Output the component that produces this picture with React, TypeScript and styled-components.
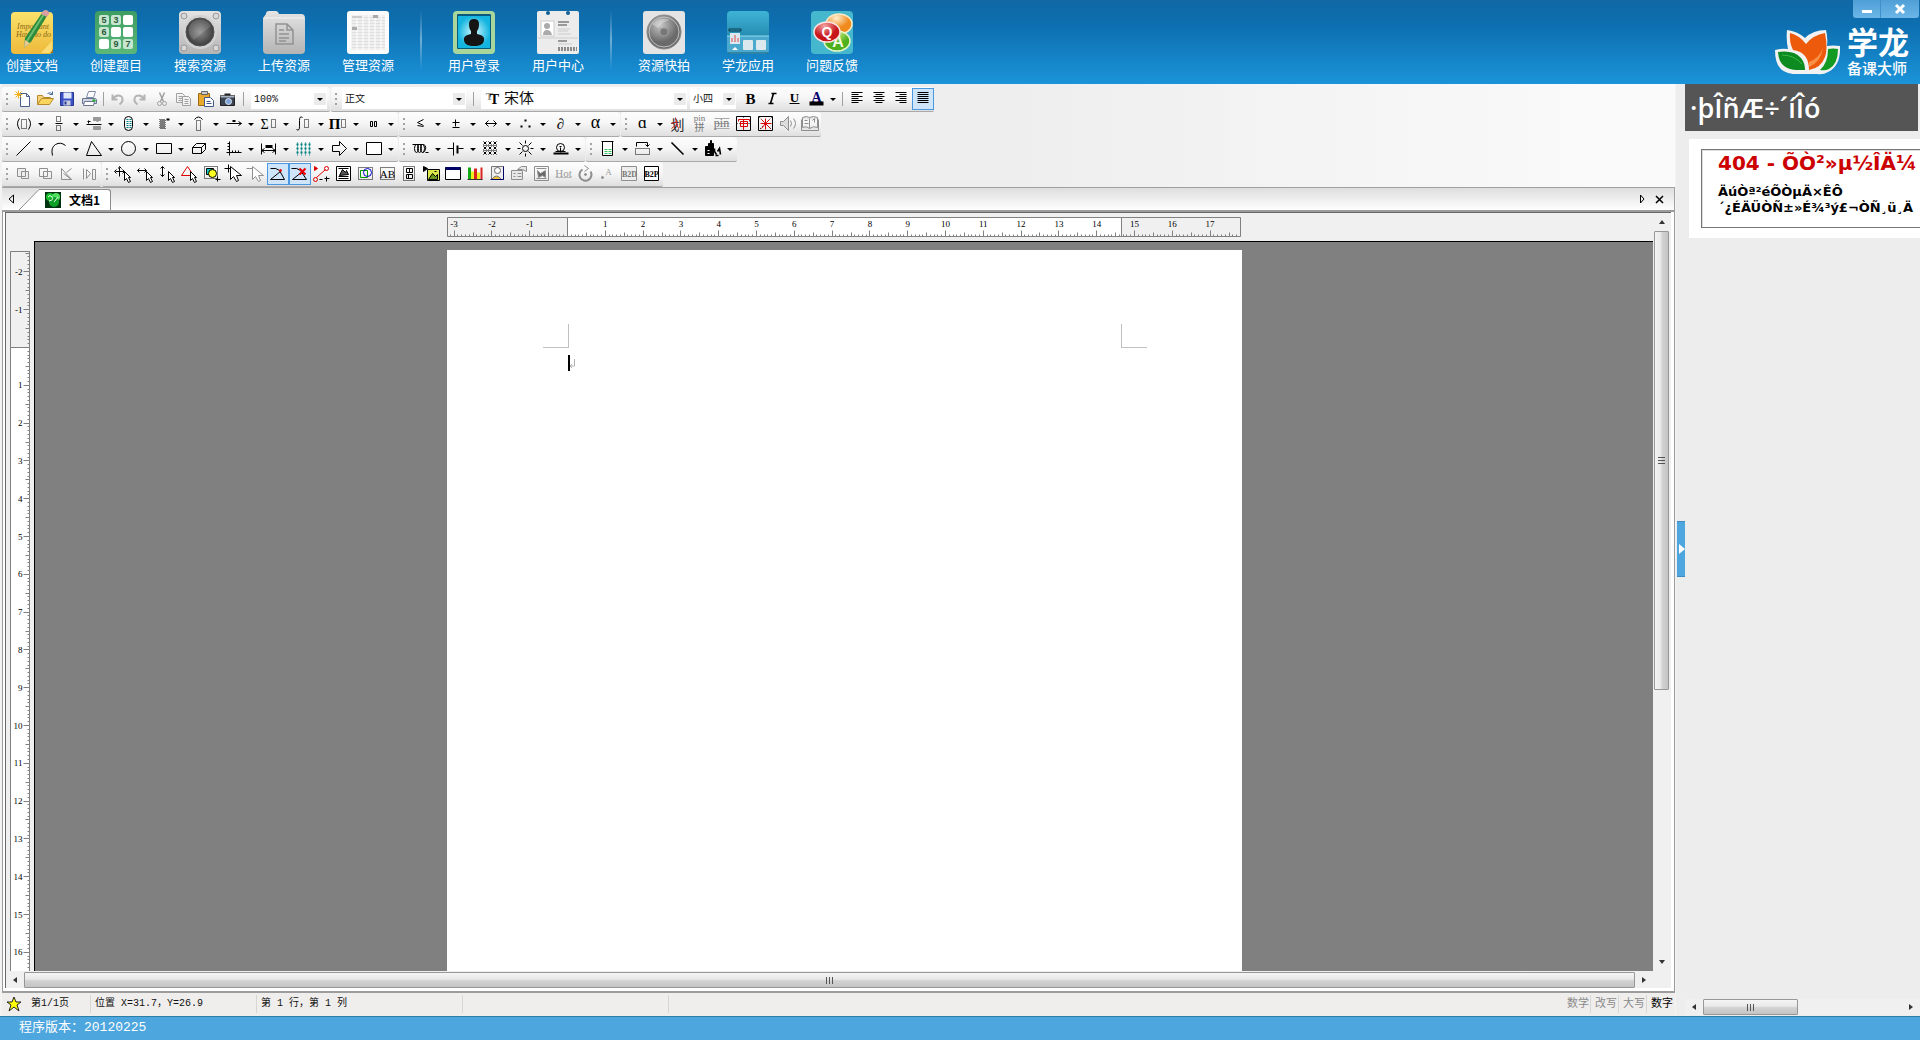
import React from "react";
import styled, { createGlobalStyle, css } from "styled-components";

const CJK = '"Noto Sans CJK SC", sans-serif';
const MONO = '"Liberation Mono", "Noto Sans CJK SC", monospace';

const Global = createGlobalStyle`
  *, *::before, *::after { box-sizing: border-box; }
  body { margin: 0; font-family: "Liberation Sans", ${CJK}; background: #eeeded; }
  button { margin: 0; padding: 0; border: 0; background: none; font: inherit; color: inherit; }
  svg { display: block; flex: none; }
`;

/* ---------- frame ---------- */

const Shell = styled.div`
  display: flex;
  flex-direction: column;
  height: 100vh;
  overflow: hidden;
`;

const Header = styled.header`
  flex: none;
  display: flex;
  justify-content: space-between;
  height: 84px;
  background: linear-gradient(#1168a4 0%, #0d6fb0 30%, #1b93d9 100%);
`;

const LaunchBar = styled.nav`
  display: flex;
  align-items: flex-start;
  gap: 20px;
  padding-top: 10px;
`;

const Launch = styled.button`
  display: flex;
  flex-direction: column;
  align-items: center;
  gap: 1px;
  width: 64px;
  color: #fff;
  font-family: ${CJK};
  font-size: 13px;
  line-height: 20px;
  white-space: nowrap;
`;

const LaunchRule = styled.span`
  width: 2px;
  height: 60px;
  background: linear-gradient(rgba(255, 255, 255, 0), rgba(255, 255, 255, 0.4), rgba(255, 255, 255, 0));
`;

const Brand = styled.div`
  display: flex;
  flex-direction: column;
  align-items: flex-end;
`;

const WindowButtons = styled.div`
  display: flex;
  height: 18px;
  margin-right: 1px;
  border-radius: 0 0 3px 3px;
  overflow: hidden;
  background: linear-gradient(#4f9fd6, #6cb6e8);
`;

const WindowButton = styled.button<{ $w: number }>`
  display: flex;
  align-items: center;
  justify-content: center;
  width: ${(p) => p.$w}px;
  & + & { border-left: 1px solid #3f8fc8; }
`;

const Logo = styled.div`
  display: flex;
  align-items: center;
  gap: 6px;
  margin: 10px 11px 0 0;
`;

const LogoWords = styled.div`
  display: flex;
  flex-direction: column;
  gap: 6px;
  color: #fff;
  font-family: ${CJK};
`;

const LogoName = styled.strong`
  font-size: 31px;
  font-weight: 700;
  line-height: 26px;
`;

const LogoSub = styled.span`
  font-size: 15px;
  font-weight: 500;
  line-height: 16px;
`;

const Main = styled.div`
  flex: 1;
  display: flex;
  min-height: 0;
`;

const Editor = styled.main`
  flex: 1;
  display: flex;
  flex-direction: column;
  min-width: 0;
  padding: 0 1px 0 2px;
  background: #f4f3f3;
`;

/* ---------- tool bars ---------- */

const ToolArea = styled.div`
  display: flex;
  flex-direction: column;
  padding-top: 3px;
  background: linear-gradient(90deg, #ececec, #eeeeee 60%, #fafafa 96%);
`;

const ToolRow = styled.div`
  display: flex;
  gap: 1px;
  height: 25px;
`;

const Group = styled.div`
  display: flex;
  align-items: center;
  padding-left: 4px;
  border-bottom: 1px solid #a9a9a9;
  border-radius: 2px 4px 2px 2px;
  background: linear-gradient(#fdfdfd, #f6f6f6 45%, #dfdfdf);
`;

const Grip = styled.span`
  width: 2px;
  height: 12px;
  margin-right: 5px;
  background: repeating-linear-gradient(#a3a3a3 0 2px, transparent 2px 5px);
`;

const Tool = styled.button<{ $on?: boolean; $menu?: boolean }>`
  display: flex;
  align-items: center;
  justify-content: ${(p) => (p.$menu ? "flex-start" : "center")};
  width: ${(p) => (p.$menu ? 35 : 22)}px;
  height: 22px;
  padding-left: ${(p) => (p.$menu ? 1 : 0)}px;
  ${(p) =>
    p.$on &&
    css`
      border: 1px solid #4b98e0;
      background: #cfe5fa;
    `}
`;

const Caret = styled.span`
  width: 0;
  height: 0;
  margin-left: 4px;
  border: 3px solid transparent;
  border-top-color: #000;
  border-bottom-width: 0;
`;

const Rule = styled.span<{ $wide?: boolean }>`
  width: 1px;
  height: 14px;
  margin: 0 ${(p) => (p.$wide ? 7 : 3)}px 0 ${(p) => (p.$wide ? 4 : 2)}px;
  background: #a0a0a0;
`;

const Field = styled.label<{ $w: number }>`
  position: relative;
  display: flex;
  align-items: center;
  width: ${(p) => p.$w}px;
  height: 20px;
  margin-right: 3px;
  padding-left: 3px;
  background: #fff;
`;

const Pick = styled.select<{ $big?: boolean }>`
  flex: 1;
  min-width: 0;
  height: 20px;
  padding: 0;
  border: 0;
  outline: 0;
  appearance: none;
  background: transparent;
  color: #111;
  font-family: ${MONO};
  font-size: ${(p) => (p.$big ? 15 : 10)}px;
`;

const FieldArrow = styled.span`
  position: absolute;
  right: 1px;
  top: 4px;
  display: flex;
  align-items: center;
  justify-content: center;
  width: 12px;
  height: 12px;
  background: #ebebeb;
  pointer-events: none;
  ${Caret} { margin: 0; }
`;

/* ---------- document tabs ---------- */

const TabStrip = styled.div`
  flex: none;
  display: flex;
  align-items: flex-end;
  height: 23px;
  border: 1px solid #a0a0a0;
  border-width: 1px 1px 0 0;
  background: linear-gradient(#dedede, #ffffff);
`;

const StripButton = styled.button`
  display: flex;
  align-items: center;
  justify-content: center;
  width: 17px;
  height: 22px;
`;

const Tab = styled.button`
  display: flex;
  align-items: center;
  height: 21px;
  padding-right: 10px;
  border: 1px solid #8c8c8c;
  border-width: 1px 1px 0 0;
  border-radius: 0 3px 0 0;
  background: #fff;
  font-family: ${CJK};
  font-size: 12px;
  font-weight: 700;
  line-height: 18px;
  gap: 8px;
`;

const StripEnd = styled.div`
  display: flex;
  gap: 1px;
  margin-left: auto;
  padding-right: 6px;
`;

/* ---------- work area ---------- */

const Frame = styled.section`
  flex: 1;
  display: flex;
  min-height: 0;
  padding: 0 3px 3px 2px;
  border: 1px solid #9c9c9c;
  border-width: 2px 1px;
  background: #fff;
`;

const Desk = styled.div`
  flex: 1;
  display: grid;
  grid-template-columns: 28px minmax(0, 1fr) 18px;
  grid-template-rows: 28px minmax(0, 1fr) 17px;
  min-width: 0;
  border: 1px solid #696969;
  border-width: 1px 0 0 1px;
  background: #f0f0f0;
`;

const TopRuler = styled.div`
  grid-column: 2;
  display: flex;
  justify-content: center;
  padding: 4px 0 0 1px;
`;

const SideRuler = styled.div`
  grid-column: 1;
  grid-row: 2;
  padding: 10px 0 0 4px;
  overflow: hidden;
`;

const Canvas = styled.div`
  grid-column: 2;
  grid-row: 2;
  display: flex;
  flex-direction: column;
  align-items: center;
  padding-top: 8px;
  border: 1px solid #000;
  border-width: 1px 0 0 1px;
  background: #808080;
`;

const Sheet = styled.article`
  flex: 1;
  width: 795px;
  padding: 74px 95px 0 96px;
  background: #fff;
`;

const Corners = styled.div`
  display: flex;
  justify-content: space-between;
`;

const Corner = styled.span<{ $side: "left" | "right" }>`
  width: 26px;
  height: 24px;
  border: 0 solid #c0c0c0;
  border-bottom-width: 1px;
  ${(p) => (p.$side === "left" ? "border-right-width: 1px;" : "border-left-width: 1px;")}
`;

const TextLine = styled.div`
  display: flex;
  align-items: center;
  height: 16px;
  margin: 7px 25px 0;
`;

const Cursor = styled.span`
  width: 2px;
  height: 16px;
  background: #000;
`;

/* ---------- scroll bars ---------- */

const VBar = styled.div`
  grid-column: 3;
  grid-row: 1 / 3;
  display: flex;
  flex-direction: column;
  padding: 0 2px 0 1px;
  background: #f0f0f0;
`;

const HBar = styled.div`
  grid-column: 1 / 3;
  grid-row: 3;
  display: flex;
  padding-top: 1px;
  background: #f0f0f0;
`;

const BarButton = styled.button<{ $vertical?: boolean }>`
  flex: none;
  display: flex;
  align-items: center;
  justify-content: center;
  width: ${(p) => (p.$vertical ? 15 : 18)}px;
  height: ${(p) => (p.$vertical ? 18 : 16)}px;
`;

const Thumb = styled.span<{ $vertical?: boolean; $part: number }>`
  flex: ${(p) => p.$part};
  display: flex;
  align-items: center;
  justify-content: center;
  border: 1px solid #979797;
  border-radius: 1px;
  background: linear-gradient(${(p) => (p.$vertical ? "90deg, " : "")}#f5f5f5, #e8e8e8 45%, #d2d2d2 55%, #c4c4c4);
`;

const Track = styled.span<{ $part: number }>`
  flex: ${(p) => p.$part};
`;

/* ---------- status ---------- */

const Status = styled.div`
  flex: none;
  display: flex;
  align-items: center;
  height: 23px;
  padding-bottom: 2px;
  background: #f0eeed;
  font-family: ${MONO};
  font-size: 10px;
  line-height: 18px;
  color: #111;
  white-space: pre;
`;

const Cell = styled.span<{ $w: number }>`
  display: flex;
  align-items: center;
  gap: 9px;
  width: ${(p) => p.$w}px;
  height: 18px;
  padding-left: 4px;
  border-right: 1px solid #d9d7d6;
`;

const Flags = styled.div`
  display: flex;
  margin-left: auto;
`;

const Flag = styled.span<{ $on?: boolean }>`
  width: 28px;
  border-right: 1px solid ${(p) => (p.$on ? "transparent" : "#d9d7d6")};
  text-align: right;
  padding-right: 1px;
  font-size: 11px;
  color: ${(p) => (p.$on ? "#000" : "#8a8a8a")};
`;

const Footer = styled.footer`
  flex: none;
  height: 24px;
  padding-left: 19px;
  border-top: 1px solid #2b7ea6;
  background: #4da6de;
  color: #fff;
  font-family: ${MONO};
  font-size: 13px;
  line-height: 22px;
`;

/* ---------- side panel ---------- */

const Splitter = styled.div`
  flex: none;
  display: flex;
  align-items: center;
  width: 9px;
  padding: 0 0 2px 1px;
`;

const Handle = styled.button`
  display: flex;
  align-items: center;
  justify-content: center;
  width: 8px;
  height: 56px;
  background: #4da6de;
  border: 1px solid #3c8cc0;
  border-width: 1px 0;
`;

const Side = styled.aside`
  flex: none;
  display: flex;
  flex-direction: column;
  width: 235px;
  min-width: 0;
  overflow: hidden;
`;

const SideTitle = styled.h1`
  margin: 0 2px 8px 0;
  padding-left: 5px;
  background: #555;
  color: #fff;
  font-family: "Open Sans", sans-serif;
  font-size: 27px;
  font-weight: 600;
  line-height: 47px;
  white-space: nowrap;
`;

const Notice = styled.div`
  margin-left: 4px;
  padding: 10px 0 10px 12px;
  background: #fff;
`;

const NoticeBox = styled.div`
  height: 79px;
  padding: 0 0 0 16px;
  border: 1px solid #777;
  border-right: 0;
  box-shadow: inset 1px 1px 0 #ddd;
  font-family: "DejaVu Sans", sans-serif;
  white-space: nowrap;
  overflow: hidden;
`;

const NoticeTitle = styled.h2`
  margin: 0 0 8px;
  color: #c00;
  font-size: 20px;
  line-height: 26px;
`;

const NoticeText = styled.p`
  margin: 0;
  font-size: 13px;
  font-weight: 700;
  line-height: 16px;
`;

const SideBar = styled.div`
  display: flex;
  height: 16px;
  margin: auto 0 1px;
  background: #f0f0f0;
`;

/* ---------- drawings ---------- */

const IconBox = styled.svg`
  overflow: visible;
`;

const Glyph = ({ children, g }: { children: React.ReactNode; g?: boolean }) => (
  <IconBox width="20" height="20" viewBox="0 0 20 20" fill="none" stroke={g ? "#8e8e8e" : "#000"} strokeWidth="1">
    <g transform="translate(.5 .5)">{children}</g>
  </IconBox>
);

const T = ({ x = 10, y, s, c = "#000", b, children }: { x?: number; y: number; s: number; c?: string; b?: boolean; children: string }) => (
  <text
    x={x}
    y={y}
    fontSize={s}
    fill={c}
    stroke="none"
    textAnchor="middle"
    fontWeight={b ? 700 : 400}
    fontFamily='"Liberation Serif", "Noto Sans CJK SC", serif'
  >
    {children}
  </text>
);

const Dots = ({ x, y, w, h, c }: { x: number; y: number; w: number; h: number; c?: string }) => (
  <rect x={x} y={y} width={w} height={h} strokeDasharray="1 1" stroke={c} />
);

const Arrow = ({ x = 9, y = 6, s = "#000" }) => (
  <path d={`M${x} ${y}v9l2-2l2 4l2-1l-2-4h2z`} fill="#fff" stroke={s} />
);

const BigArrow = ({ s = "#000" }) => <path d="M6 2v13l3-3l3 5l2-1l-2-5h5z" fill="#fff" stroke={s} />;

const Triangle = ({ dir, size = 3, color = "#333" }: { dir: "up" | "down" | "left" | "right"; size?: number; color?: string }) => {
  const turn = { up: 180, down: 0, left: 90, right: -90 }[dir];
  return (
    <svg width="10" height="10" viewBox="-5 -5 10 10">
      <path d={`M${-size}-2H${size}L0 ${size - 1}z`} fill={color} transform={`rotate(${turn})`} />
    </svg>
  );
};

const Ridges = ({ vertical }: { vertical?: boolean }) => (
  <svg width="9" height="9" viewBox="0 0 9 9" stroke="#555">
    <path d={vertical ? "M1 1.5h7M1 4.5h7M1 7.5h7" : "M1.5 1v7M4.5 1v7M7.5 1v7"} />
  </svg>
);

type Item = { n: string; i: React.ReactNode; m?: boolean; on?: boolean; g?: boolean };

const fileTools: Item[] = [
  { n: "新建", i: <><path d="M6 4h6l3 3v10H6z" fill="#fff" stroke="#4a5f8c" /><path d="M12 4v3h3" stroke="#4a5f8c" /><path d="M4 1v8M0 5h8M1 2l6 6M7 2L1 8" stroke="#f2b320" /></> },
  { n: "打开", i: <><path d="M1 15V6h5l1 2h7v3" fill="#f7d27a" stroke="#b78a2a" /><path d="M1 15l4-6h12l-4 6z" fill="#fbd65e" stroke="#b78a2a" /><path d="M11 4q3-2 5 1M16 2v3h-3" stroke="#4a6a9c" /></> },
  { n: "保存", i: <><path d="M2 3h13v13H2z" fill="#3c50c8" stroke="#27368f" /><path d="M5 3h8v6H5z" fill="#dfe8fb" stroke="none" /><path d="M5 11h7v5H5z" fill="#c8cede" stroke="none" /><path d="M6 12h2v3H6z" fill="#27368f" stroke="none" /></> },
  { n: "打印", i: <><path d="M6 8l2-6h7l-2 6z" fill="#fff" stroke="#7d8aa5" /><path d="M2 9h13l1 1v4H2z" fill="#cfd5e0" stroke="#6a7691" /><path d="M4 12h10l-1 4H3z" fill="#fff" stroke="#6a7691" /><path d="M12 11h3" stroke="#1ea82a" strokeWidth="2" /></> },
];

const editTools: Item[] = [
  { n: "撤销", i: <path d="M4 5v5h5M4 10q4-6 9-3q3 4-2 8" stroke="#b4b4b4" strokeWidth="2" /> },
  { n: "重做", i: <path d="M14 5v5h-5M14 10q-4-6-9-3q-3 4 2 8" stroke="#b4b4b4" strokeWidth="2" /> },
  { n: "剪切", i: <g stroke="#a0a0a0"><path d="M7 3l4 9M12 3L8 12" strokeWidth="1.5" /><circle cx="7" cy="14" r="2" /><circle cx="12" cy="14" r="2" /></g> },
  { n: "复制", i: <g stroke="#a0a0a0" fill="#f4f4f4"><path d="M2 4h6l2 2v7H2zM4 7h4M4 9h4M4 11h4" /><path d="M8 7h6l2 2v7H8zM10 10h4M10 12h4M10 14h4" /></g> },
  { n: "粘贴", i: <><path d="M2 4h11v12H2z" fill="#e9a92c" stroke="#9a6a12" /><path d="M5 2h6v3H5z" fill="#ccc" stroke="#666" /><path d="M8 8h6l3 3v6H8z" fill="#fff" stroke="#43598c" /><path d="M10 12h4M10 14h5" stroke="#43598c" /></> },
  { n: "截图", i: <><path d="M2 6h14v10H2z" fill="#3b4452" stroke="#222" /><path d="M2 6h14v2H2z" fill="#aab4c4" stroke="none" /><path d="M6 4h6v2H6z" fill="#222" stroke="none" /><circle cx="10" cy="12" r="3" fill="#7fa4d8" stroke="#dde6f2" /></> },
];

const alignTools: Item[] = [
  { n: "左对齐", i: <path d="M4 3h11M4 5h7M4 7h11M4 9h7M4 11h11M4 13h7" /> },
  { n: "居中", i: <path d="M4 3h11M6 5h7M4 7h11M6 9h7M4 11h11M6 13h7" /> },
  { n: "右对齐", i: <path d="M4 3h11M8 5h7M4 7h11M8 9h7M4 11h11M8 13h7" /> },
  { n: "两端对齐", on: true, i: <path d="M4 3h11M4 5h11M4 7h11M4 9h11M4 11h11M4 13h11" /> },
];

const mathTools: Item[] = [
  { n: "括号", i: <><path d="M5 4Q1 9 5 15M14 4Q18 9 14 15" /><Dots x={7} y={5} w={5} h={9} /></> },
  { n: "分式", i: <><Dots x={7} y={2} w={4} h={5} /><path d="M6 9h7" /><Dots x={7} y={11} w={4} h={5} /></> },
  { n: "竖式", i: <><path d="M9 3h7v3H9zM9 12h7v3H9z" fill="#999" stroke="#999" /><path d="M2 10h15M3 7h3M4 6v3" /><path d="M12 7h2" stroke="#999" /></> },
  { n: "矩阵", i: <><rect x="5" y="2" width="8" height="14" rx="4" /><path d="M7 5h5M7 7h5M7 9h5M7 11h5M7 13h5" stroke="#008080" strokeDasharray="2 1" /></> },
  { n: "上下标", i: <><path d="M5 5h6M5 7h6M5 9h6M5 11h6M5 13h6" strokeDasharray="1 1" /><path d="M6 6h6M6 8h6M6 10h6M6 12h6M6 14h6" strokeDasharray="1 1" /><path d="M12 5h3" strokeWidth="2" /></> },
  { n: "弧", i: <><path d="M5 5Q9 0 13 5" /><Dots x={7} y={6} w={4} h={10} /></> },
  { n: "箭头", i: <path d="M2 9h15M14 7l3 2l-3 2M8 7h3M8 6h3" /> },
  { n: "求和", i: <><T x={5} y={14} s={14}>Σ</T><Dots x={12} y={5} w={4} h={8} /></> },
  { n: "积分", i: <><path d="M8 3Q5 1 5 6V12Q5 17 2 15" /><Dots x={10} y={5} w={4} h={8} /></> },
  { n: "求积", i: <><T x={5} y={14} s={15} b>Π</T><Dots x={12} y={5} w={4} h={8} /></> },
  { n: "间距", i: <path d="M6 7h2v5H6zM10 7h2v5h-2z" /> },
];

const symbolTools: Item[] = [
  { n: "关系", i: <path d="M12 5l-6 3l6 3M6 11l6 1" /> },
  { n: "运算", i: <path d="M6 8h7M9 5v7M6 13h7" /> },
  { n: "双向", i: <path d="M4 9h11M7 6L4 9l3 3M12 6l3 3l-3 3" /> },
  { n: "逻辑", i: <path d="M9 5v2M5 11v2M13 11v2" strokeWidth="2" /> },
  { n: "偏导", i: <T x={9} y={14} s={15}>∂</T> },
  { n: "希腊字母", i: <T x={9} y={13} s={18}>α</T> },
];

const pinyinTools: Item[] = [
  { n: "笔画", i: <><T x={9} y={15} s={14} c="#222">划</T><path d="M3 9l6-2M7 3l1 6l2 5M3 14l6-5" stroke="#c22" /></> },
  { n: "拼音", i: <><T x={9} y={6} s={9} c="#777">pin</T><T x={9} y={16} s={10} c="#777">拼</T></> },
  { n: "拼音线", i: <><path d="M2 4h15M2 9h15M2 14h15" stroke="#aaa" /><T x={9} y={12} s={12} c="#777">pin</T></> },
  { n: "田字格", i: <><path d="M2 2h14v14H2z" /><path d="M9 2v14M2 9h14" strokeDasharray="1 2" /><path d="M6 7h7v5H6zM6 9h7M9 5v10M4 7V5h11v2" stroke="#d00" /></> },
  { n: "米字格", i: <><path d="M2 2h14v14H2z" /><path d="M3 3l12 12M15 3L3 15" strokeDasharray="1 2" /><path d="M4 9h11M9 4v11M9 9l-4 5M9 9l5 5M5 5l3 3M13 5l-3 3" stroke="#d00" /></> },
  { n: "朗读", g: true, i: <><path d="M2 7h3l5-5v14l-5-5H2z" fill="#ddd" /><path d="M12 6q2 3 0 6M15 4q4 5 0 10" /></> },
  { n: "词典", g: true, i: <><path d="M2 3q4-2 7 0q4-2 8 0v10q-4-2-8 1q-3-3-7-1zM1 5v11h17V5" fill="#e6e6e6" /><path d="M4 6h3M12 6l2-2v4M4 9h4M9 4v10" /></> },
];

const shapeTools: Item[] = [
  { n: "直线", i: <path d="M2 16L16 2" /> },
  { n: "曲线", i: <path d="M3 16Q1 8 6 5T16 6" /> },
  { n: "三角形", i: <path d="M7 2L2 16h15z" /> },
  { n: "圆", i: <circle cx="9" cy="9" r="7" /> },
  { n: "矩形", i: <path d="M2 4h15v10H2z" /> },
  { n: "立体", i: <path d="M3 8h9v6H3zM3 8l4-4h9l-4 4M16 4v6l-4 4" /> },
  { n: "坐标", i: <path d="M5 2v14M2 13h15M3 4h2M3 7h2M3 10h2M8 11v2M11 11v2M14 11v2" /> },
  { n: "尺寸", i: <><path d="M2 4v11M16 4v11M2 11h14M5 9l-3 2l3 2M13 9l3 2l-3 2" /><path d="M6 7h7" strokeWidth="3" /></> },
  { n: "网格", i: <><path d="M2 5h16M2 9h16M2 13h16" stroke="#008080" strokeWidth="2" strokeDasharray="2 2" /><path d="M3 3v13M7 3v13M11 3v13M15 3v13" stroke="#008080" strokeDasharray="1 1" /></> },
  { n: "箭头形", i: <path d="M3 6h7V2l7 7l-7 7v-4H3z" /> },
  { n: "方框", i: <path d="M2 3h15v12H2z" fill="#fff" /> },
];

const scienceTools: Item[] = [
  { n: "线圈", i: <><ellipse cx="5" cy="9" rx="2" ry="4" /><ellipse cx="8" cy="9" rx="2" ry="4" /><ellipse cx="11" cy="9" rx="2" ry="4" /><path d="M1 5h10q4 0 3 5q-1 3-3 3M14 13h3" /></> },
  { n: "电池", i: <><path d="M1 9h6M7 3v13M12 9h5" /><path d="M11 6v8" strokeWidth="2" /></> },
  { n: "晶格", i: <>{[3, 8, 13].map((y) => <path key={y} d={`M2 ${y - 1}l3 3M5 ${y - 1}l-3 3M7 ${y - 1}l3 3M10 ${y - 1}l-3 3M12 ${y - 1}l3 3M15 ${y - 1}l-3 3`} />)}<path d="M2 6h14M2 11h14" strokeDasharray="1 1" /></> },
  { n: "光", i: <><circle cx="9" cy="9" r="3" /><path d="M9 1v3M9 14v3M1 9h3M14 9h3M3 3l3 3M12 12l3 3M15 3l-3 3M6 12l-3 3" /></> },
  { n: "灯泡", i: <><circle cx="9" cy="8" r="4" /><path d="M9 8v5M8 7h2" /><path d="M2 14h15" strokeWidth="2" /><path d="M4 12h10" /></> },
];

const moreTools: Item[] = [
  { n: "烧杯", i: <><path d="M3 2h12M4 2v14h10V2" fill="#fff" /><path d="M6 10h7M6 12h7M6 14h7" stroke="#35c35a" strokeDasharray="3 1" /></> },
  { n: "装置", i: <><path d="M3 7V3h11v4M12 5l2 2l2-2" /><path d="M2 9h14v6H2z" strokeDasharray="1 1" /></> },
  { n: "斜线", i: <path d="M3 3l12 12" strokeWidth="1.6" /> },
  { n: "素材", i: <><path d="M2 7h3V4h2V1h1v3h2v12H2z" fill="#000" /><path d="M4 11h2M4 14h2" stroke="#fff" /><path d="M11 9v3l2 3M14 12l2-3l1 6M12 16h3" strokeWidth="1.6" /></> },
];

const arrangeTools: Item[] = [
  { n: "组合", g: true, i: <path d="M3 4h8v8H3zM7 7h7v7H7z" fill="#eee" /> },
  { n: "拆分", g: true, i: <path d="M3 4h8v8H3zM7 7h8v7H7z" /> },
  { n: "翻转", g: true, i: <path d="M3 4v11h10zM5 9l8 6M8 8l5-4" /> },
  { n: "镜像", g: true, i: <path d="M3 4v11M6 5l4 4l-4 5zM12 5h3v10h-3z" /> },
];

const objectTools: Item[] = [
  { n: "移动", i: <><path d="M1 7h9M5 3v9M4 4l1-2l2 2M2 5L0 7l2 2M8 5l2 2l-2 2" /><Arrow x={10} y={7} /></> },
  { n: "水平移动", i: <><path d="M1 6h9M3 4L1 6l2 2M8 4l2 2l-2 2" /><Arrow x={10} y={7} /></> },
  { n: "垂直移动", i: <><path d="M4 2v10M2 4l2-2l2 2M2 10l2 2l2-2" /><Arrow x={10} y={7} /></> },
  { n: "变形", i: <><path d="M1 11L7 2l6 9z" stroke="#d00" /><Arrow x={10} y={7} /></> },
  { n: "选择图形", i: <><Dots x={2} y={2} w={13} h={12} /><path d="M4 4h7v6H4z" fill="#0cc" /><circle cx="10" cy="9" r="4" fill="#ff2" /><path d="M15 12v5M13 15h5" /></> },
  { n: "加选", i: <><path d="M0 4h8M4 0v8" /><BigArrow /></> },
  { n: "减选", g: true, i: <><path d="M0 4h7" /><BigArrow s="#8e8e8e" /></> },
  { n: "折线", on: true, i: <><path d="M2 4q6-1 9 2L16 15H2L12 7" /><circle cx="12" cy="6" r="1" stroke="#e00" fill="#e00" /></> },
  { n: "删除点", on: true, i: <><path d="M1 4q6-1 9 2L16 15H2L12 7" /><path d="M9 4l6 6M15 4l-6 6" stroke="#e00" strokeWidth="2" /></> },
  { n: "节点", i: <><path d="M2 2v4l3-2zM4 13l9-8" stroke="#d00" fill="#d00" /><circle cx="14" cy="4" r="2" stroke="#d00" /><circle cx="3" cy="15" r="2" stroke="#d00" /><path d="M7 15h3M12 14h5M14 12v5" /></> },
  { n: "图文", i: <><path d="M2 2h14v14H2z" fill="#fff" /><path d="M4 4h10M4 12h10M4 14h10M5 11l3-6l3 3l1-2l2 4z" fill="#555" /></> },
  { n: "图形", i: <><Dots x={2} y={3} w={14} h={12} /><path d="M4 6h7v7H4z" stroke="#090" /><circle cx="11" cy="8" r="4" stroke="#00c" /></> },
  { n: "文本", i: <><Dots x={2} y={3} w={14} h={12} /><T x={9} y={13} s={11}>AB</T></> },
  { n: "竖排文本", i: <><Dots x={3} y={2} w={11} h={14} /><path d="M6 4h6v4H6zM9 4v4M6 10h6v4H6zM8 10v4" /></> },
  { n: "图片", i: <><path d="M5 5h12v11H5z" fill="#dde84c" /><path d="M6 15l4-6l3 3l2-2v5zM12 7h2" fill="#6a9a20" /><path d="M1 2v5l4-3z" fill="#000" /></> },
  { n: "窗口", i: <><path d="M1 3h15v12H1z" fill="#fff" /><path d="M1 4h15" stroke="#006" strokeWidth="3" /></> },
  { n: "图表", i: <><path d="M3 3v12" stroke="#1a1" strokeWidth="3" /><path d="M6 7v8" stroke="#ee2" strokeWidth="3" /><path d="M9 4v11" stroke="#d22" strokeWidth="3" /><path d="M12 8v7" stroke="#ee2" strokeWidth="3" /><path d="M15 3v12" stroke="#d22" strokeWidth="2" /><path d="M1 15h15" stroke="#333" /></> },
  { n: "人物", i: <><path d="M3 2h12v13H3z" fill="#eee" stroke="#777" /><circle cx="9" cy="6" r="3" fill="#fff" stroke="#666" /><path d="M3 15q5-7 10 0z" fill="#e7c23a" stroke="#777" /><path d="M15 2v13H2" stroke="#006" /></> },
  { n: "属性", g: true, i: <path d="M1 6h11v9H1zM3 9h2M7 9h4M3 12h2M7 12h4M7 5l4-3h5v5l-4-2z" fill="#e8e8e8" /> },
  { n: "动画", g: true, i: <><path d="M2 2h14v14H2zM4 4h10M4 14h10" /><path d="M5 6l3 3l5-3v7l-3-2l-4 2z" fill="#666" /></> },
  { n: "热区", g: true, i: <><T x={9} y={12} s={11} c="#999">Hot</T><path d="M1 13h16" stroke="#bbb" /></> },
  { n: "旋转", g: true, i: <><path d="M6 5a6 6 0 1 0 8 2" strokeWidth="2" /><path d="M8 1l4 3l-4 3" /><circle cx="9" cy="10" r="1" fill="#888" /></> },
  { n: "点标注", g: true, i: <><circle cx="4" cy="13" r="1" fill="#888" /><T x={10} y={10} s={9} c="#999">A</T></> },
  { n: "标签", g: true, i: <><path d="M1 2h15v14H1z" fill="#eee" /><T x={9} y={12} s={8} c="#777" b>B2D</T></> },
  { n: "标签面板", i: <><path d="M2 2h14v14H2z" fill="#fff" /><T x={9} y={12} s={8} b>B2P</T></> },
];

const ToolItems = ({ items, menu }: { items: Item[]; menu?: boolean }) => (
  <>
    {items.map((t) => (
      <Tool key={t.n} aria-label={t.n} $on={t.on} $menu={menu}>
        <Glyph g={t.g}>{t.i}</Glyph>
        {menu && <Caret />}
      </Tool>
    ))}
  </>
);

const Combo = ({ w, label, value, big, icon }: { w: number; label: string; value: string; big?: boolean; icon?: React.ReactNode }) => (
  <Field $w={w}>
    {icon}
    <Pick $big={big} aria-label={label} defaultValue={value}>
      <option>{value}</option>
    </Pick>
    <FieldArrow><Caret /></FieldArrow>
  </Field>
);

/* ---------- launch icons ---------- */

const Tile = ({ children }: { children: React.ReactNode }) => (
  <svg width="44" height="44" viewBox="0 0 44 44">{children}</svg>
);

const LaunchDefs = () => (
  <defs>
    <linearGradient id="note" x2="0" y2="1"><stop stopColor="#f9e26b" /><stop offset="1" stopColor="#eeb93a" /></linearGradient>
    <linearGradient id="steel" x2="0" y2="1"><stop stopColor="#e4e4e4" /><stop offset="1" stopColor="#b4b4b4" /></linearGradient>
    <linearGradient id="green" x2="0" y2="1"><stop stopColor="#3d9c62" /><stop offset="1" stopColor="#5cb878" /></linearGradient>
    <linearGradient id="aqua" x2="0" y2="1"><stop stopColor="#3fb4d6" /><stop offset="1" stopColor="#136f98" /></linearGradient>
    <radialGradient id="glow"><stop stopColor="#d5fbff" /><stop offset="1" stopColor="#12b4e0" /></radialGradient>
    <radialGradient id="lens"><stop stopColor="#8c8c8c" /><stop offset="1" stopColor="#3c3c3c" /></radialGradient>
    <radialGradient id="ball" cx=".4" cy=".3"><stop stopColor="#c6c6c6" /><stop offset="1" stopColor="#6a6a6a" /></radialGradient>
    <radialGradient id="q" cx=".4" cy=".2"><stop stopColor="#f3a3a3" /><stop offset="1" stopColor="#c8171b" /></radialGradient>
    <radialGradient id="o" cx=".4" cy=".2"><stop stopColor="#fff0d0" /><stop offset="1" stopColor="#f08a1c" /></radialGradient>
    <radialGradient id="a" cx=".5" cy=".1"><stop stopColor="#d3f08c" /><stop offset="1" stopColor="#4fb01e" /></radialGradient>
  </defs>
);

const word = (x: number, y: number, s: number, t: string, fill: string) => (
  <text key={t + x} x={x} y={y} fontSize={s} fontFamily='"Liberation Sans", sans-serif' fontWeight="700" textAnchor="middle" fill={fill}>{t}</text>
);

const sudoku = ["5", "3", "", "6", "", "", "", "9", "7"];

const launchers: (null | { n: string; i: React.ReactNode })[] = [
  { n: "创建文档", i: <><LaunchDefs /><rect x="1" y="2" width="42" height="42" rx="4" fill="url(#note)" /><path d="M3 43h37l3-4v4z" fill="#a8751a" /><path d="M31 43l11-12v8q0 4-4 4z" fill="#fbdc74" /><g fontFamily='"Liberation Serif", serif' fontSize="8" fontStyle="italic" fill="#8c6a1a"><text x="7" y="19">Important</text><text x="6" y="27">Have to do</text></g><path d="M32 3l5 3L21 32l-7 6l1-10z" fill="#2c8a3c" /><path d="M34 4L17 31" stroke="#6cc070" strokeWidth="2" /><path d="M33 1q3-2 5 0t1 3l-2 3l-6-3z" fill="#d8a0a0" /><path d="M15 30l5 3l-6 5z" fill="#e8c896" /></> },
  { n: "创建题目", i: <><rect x="1" y="1" width="42" height="43" rx="4" fill="url(#green)" />{sudoku.map((d, k) => { const x = 5 + (k % 3) * 12; const y = 5 + Math.floor(k / 3) * 12; return <g key={k}><rect x={x} y={y} width="10" height="10" rx="2" fill={d ? "#c6e6cf" : "#fff"} />{d && word(x + 5, y + 8, 9, d, "#2b5a3a")}</g>; })}</> },
  { n: "搜索资源", i: <><rect x="1" y="1" width="42" height="43" rx="4" fill="url(#steel)" />{[6, 38].flatMap((x) => [6, 38].map((y) => <circle key={`${x}${y}`} cx={x} cy={y} r="3" fill="#d8d8d8" stroke="#999" />))}<circle cx="22" cy="22" r="17" fill="#d2d2d2" /><circle cx="22" cy="22" r="14" fill="url(#lens)" stroke="#555" /><path d="M11 17a12 12 0 0 1 22-1L16 30a12 12 0 0 1-5-13z" fill="#fff" opacity=".14" /></> },
  { n: "上传资源", i: <><path d="M4 4q0-3 3-3h7q2 0 3 3h22q4 0 4 4v32q0 4-4 4H5q-4 0-4-4V8z" fill="url(#steel)" /><path d="M2 8h40" stroke="#f2f2f2" /><path d="M14 14h11l6 6v14H14zM25 14v6h6M17 20h5M17 24h10M17 28h10M17 31h7" fill="none" stroke="#939393" strokeWidth="1.5" /></> },
  { n: "管理资源", i: <><rect x="1" y="1" width="42" height="43" rx="3" fill="#fbfbfb" /><rect x="5" y="5" width="34" height="35" fill="#dedede" />{[5, 11, 17, 23, 29, 35, 40].map((x) => <path key={x} d={`M${x} 5v35`} stroke="#fff" />)}{Array.from({ length: 12 }, (_, k) => <path key={k} d={`M5 ${6 + k * 3}h34`} stroke="#fff" />)}<path d="M27 5h5v3h-5zM6 17h5v3H6z" fill="#aaa" /><path d="M6 6h10v2H6z" fill="#ccc" /></> },
  null,
  { n: "用户登录", i: <><rect x="1" y="1" width="42" height="43" rx="4" fill="#a9d79b" /><rect x="5" y="4" width="34" height="35" rx="1" fill="#0a5a80" /><rect x="6" y="6" width="32" height="32" fill="url(#glow)" /><path d="M17 14q0-5 5-5t5 5q0 5-2 7v3q6 1 7 4q1 8-10 8t-10-8q1-3 7-4v-3q-2-2-2-7z" fill="#151515" /></> },
  { n: "用户中心", i: <><rect x="1" y="1" width="42" height="43" rx="2" fill="#ececec" /><circle cx="12" cy="3" r="2" fill="#0d5f96" /><circle cx="32" cy="3" r="2" fill="#0d5f96" /><rect x="5" y="11" width="13" height="15" fill="#fff" stroke="#ccc" /><circle cx="11" cy="16" r="3" fill="#aaa" /><path d="M7 25q0-5 4-5t5 5z" fill="#aaa" /><path d="M22 12h11M22 15h9M22 31h9" stroke="#999" strokeWidth="2" /><path d="M22 19h12M22 21h10M22 24h13M2 28h40M22 34h14" stroke="#ccc" /><path d="M22 39h19" stroke="#888" strokeWidth="4" strokeDasharray="2 1" /></> },
  null,
  { n: "资源快拍", i: <><rect x="1" y="1" width="42" height="43" rx="3" fill="#e4e4e4" /><circle cx="22" cy="22" r="17" fill="url(#ball)" stroke="#8a8a8a" /><circle cx="22" cy="22" r="15" fill="none" stroke="#c2c2c2" /><circle cx="22" cy="22" r="4" fill="#777" stroke="#999" /><path d="M10 14q8-8 18-4q-8 2-12 8z" fill="#fff" opacity=".3" /></> },
  { n: "学龙应用", i: <><rect x="1" y="1" width="42" height="43" rx="4" fill="url(#aqua)" /><path d="M1 26h42v14q0 4-4 4H5q-4 0-4-4z" fill="#4aa9cc" /><path d="M1 26h42" stroke="#8fdcf0" /><path d="M3 19h12v2H3z" fill="none" stroke="#0c3c50" /><g fill="#dbe9ee"><rect x="4" y="23" width="10" height="11" /><rect x="17" y="30" width="10" height="10" rx="1" /><rect x="30" y="30" width="10" height="10" rx="1" /></g><path d="M6 32v-4M9 32v-7M12 32v-4" stroke="#e0484c" /><path d="M6 40l3-3l3 3z" fill="#fff" /><path d="M2 43h40" stroke="#13607e" /></> },
  { n: "问题反馈", i: <><rect x="1" y="1" width="42" height="43" rx="4" fill="#46b8ce" /><ellipse cx="29" cy="14" rx="13" ry="10" fill="url(#o)" stroke="#fbe9c6" strokeWidth="1.5" /><ellipse cx="27" cy="31" rx="13" ry="10" fill="url(#a)" stroke="#e6f8c8" strokeWidth="1.5" />{word(28, 37, 16, "A", "#f0fbe0")}<ellipse cx="17" cy="22" rx="13" ry="10" fill="url(#q)" stroke="#fbe3e3" strokeWidth="1.5" />{word(17, 27, 14, "Q", "#fff")}</> },
];

/* ---------- rulers ---------- */

const CM = 37.8;

const ticks = (from: number, to: number, draw: (p: number, len: number) => string) => {
  let d = "";
  for (let k = Math.ceil(from * 10); k <= to * 10; k++) {
    d += draw(Math.round((k / 10) * CM), k % 10 === 0 ? 6 : k % 5 === 0 ? 4 : 2);
  }
  return d;
};

const numbers = (from: number, to: number) =>
  Array.from({ length: to - from + 1 }, (_, k) => k + from).filter((n) => n !== 0);

const HRuler = () => (
  <svg width="795" height="20" viewBox="-120.5 -.5 795 20" fontFamily='"Liberation Serif", serif' fontSize="9">
    <path d="M-120 0H673V19H-120z" fill="#f0f0f0" stroke="#808080" />
    <path d="M0 0H554V19H0z" fill="#fff" stroke="#808080" />
    <path d={ticks(-3.1, 17.7, (p, l) => `M${p} 19v${-l}`)} stroke="#808080" />
    {numbers(-3, 17).map((n) => (
      <text key={n} x={n * CM} y="9" textAnchor="middle" fill="#000">{n}</text>
    ))}
  </svg>
);

const VRuler = () => (
  <svg width="20" height="1123" viewBox="-.5 -96.5 20 1123" fontFamily='"Liberation Serif", serif' fontSize="9">
    <path d="M0-96H19V1020H0z" fill="#fff" stroke="#808080" />
    <path d="M0-96H19V0H0z" fill="#f0f0f0" stroke="#808080" />
    <path d={ticks(-2.5, 26, (p, l) => `M19 ${p}h${-l}`)} stroke="#808080" />
    {numbers(-2, 16).map((n) => (
      <text key={n} x="12" y={n * CM + 3} textAnchor="end" fill="#000">{n}</text>
    ))}
  </svg>
);

export default function App() {
  return (
    <Shell>
      <Global />
      <Header>
        <LaunchBar>
          {launchers.map((l, k) =>
            l ? (
              <Launch key={l.n}>
                <Tile>{l.i}</Tile>
                {l.n}
              </Launch>
            ) : (
              <LaunchRule key={k} />
            )
          )}
        </LaunchBar>
        <Brand>
          <WindowButtons>
            <WindowButton $w={27} aria-label="最小化"><svg width="12" height="10"><path d="M1 6h10v3H1z" fill="#fff" /></svg></WindowButton>
            <WindowButton $w={39} aria-label="关闭"><svg width="12" height="12"><path d="M2 2l8 8M10 2l-8 8" stroke="#fff" strokeWidth="3" /></svg></WindowButton>
          </WindowButtons>
          <Logo>
            <svg width="67" height="48" viewBox="0 0 67 48">
              <path d="M13 2q10 1 18 8q8-8 21-8q2 8 1 16q6-1 13 0q1 20-12 26q-5 3-11 2H19Q1 45 1 22q6-2 13-1q-2-9-1-19z" fill="#f2f2f2" />
              <path d="M54 21q5-1 10 0q0 15-9 20q-4 2-9 1q8-7 8-21z" fill="#129a22" />
              <path d="M16 5q9 2 16 11q7-9 19-11q3 16 0 24q-4 11-16 13q0-18-16-20q-4-8-3-17z" fill="#ee5a0c" />
              <path d="M49 20q-2 14-14 19v-5q10-4 14-14z" fill="#f89048" />
              <path d="M4 24q16-2 23 6q4 5 4 12H22Q5 41 4 24z" fill="#0d8a20" />
              <path d="M8 27q12 0 20 9" stroke="#3cb848" fill="none" />
            </svg>
            <LogoWords>
              <LogoName>学龙</LogoName>
              <LogoSub>备课大师</LogoSub>
            </LogoWords>
          </Logo>
        </Brand>
      </Header>

      <Main>
        <Editor>
          <ToolArea>
            <ToolRow>
              <Group>
                <Grip />
                <ToolItems items={fileTools} />
                <Rule />
                <ToolItems items={editTools} />
                <Rule $wide />
                <Combo w={76} label="缩放" value="100%" />
              </Group>
              <Group>
                <Grip />
                <Combo w={124} label="样式" value="正文" />
                <Rule $wide />
                <Combo
                  w={206}
                  label="字体"
                  value="宋体"
                  big
                  icon={<Glyph><T x={5} y={10} s={11} c="#888" b>T</T><T x={10} y={14} s={14} b>T</T></Glyph>}
                />
                <Combo w={46} label="字号" value="小四" />
                <ToolItems
                  items={[
                    { n: "加粗", i: <T y={14} s={15} b>B</T> },
                    { n: "倾斜", i: <path d="M9 4h5M6 14h5M11 4L8 14" strokeWidth="1.6" /> },
                    { n: "下划线", i: <><T y={12} s={13} b>U</T><path d="M5 14h10" /></> },
                  ]}
                />
                <ToolItems menu items={[{ n: "字体颜色", i: <><T y={12} s={14} c="#000070" b>A</T><path d="M3 14h14" strokeWidth="4" /></> }]} />
                <Rule />
                <ToolItems items={alignTools} />
              </Group>
            </ToolRow>
            <ToolRow>
              <Group><Grip /><ToolItems menu items={mathTools} /></Group>
              <Group><Grip /><ToolItems menu items={symbolTools} /></Group>
              <Group>
                <Grip />
                <ToolItems menu items={[{ n: "拼音字母", i: <T x={9} y={13} s={17}>ɑ</T> }]} />
                <ToolItems items={pinyinTools} />
              </Group>
            </ToolRow>
            <ToolRow>
              <Group><Grip /><ToolItems menu items={shapeTools} /></Group>
              <Group><Grip /><ToolItems menu items={scienceTools} /></Group>
              <Group><Grip /><ToolItems menu items={moreTools} /></Group>
            </ToolRow>
            <ToolRow>
              <Group><Grip /><ToolItems items={arrangeTools} /></Group>
              <Group><Grip /><ToolItems items={objectTools} /></Group>
            </ToolRow>
          </ToolArea>

          <TabStrip>
            <StripButton aria-label="上一个"><svg width="8" height="10"><path d="M6.500 1v8L2 5z" fill="none" stroke="#000" /></svg></StripButton>
            <svg width="22" height="21"><path d="M0 21L20 .5H22V21z" fill="#fff" /><path d="M0 21L20 .5H22" fill="none" stroke="#8c8c8c" /></svg>
            <Tab>
              <svg width="20" height="16" viewBox="-4 0 20 16"><path d="M0 0h16v16H0z" fill="#031" /><circle cx="5" cy="5" r="4" fill="#18c030" /><circle cx="11" cy="5" r="4" fill="#50e060" /><circle cx="9" cy="10" r="5" fill="#0fa028" /><path d="M3 5q2-3 4 0t-3 4M9 10l4-5" stroke="#eaffea" fill="none" /></svg>
              文档1
            </Tab>
            <StripEnd>
              <StripButton aria-label="下一个"><svg width="8" height="10"><path d="M2.500 1v8L6 5z" fill="none" stroke="#000" /></svg></StripButton>
              <StripButton aria-label="关闭文档"><svg width="9" height="9"><path d="M1 1l7 7M8 1L1 8" stroke="#000" strokeWidth="1.5" /></svg></StripButton>
            </StripEnd>
          </TabStrip>

          <Frame>
            <Desk>
              <TopRuler><HRuler /></TopRuler>
              <SideRuler><VRuler /></SideRuler>
              <Canvas>
                <Sheet>
                  <Corners>
                    <Corner $side="left" />
                    <Corner $side="right" />
                  </Corners>
                  <TextLine>
                    <Cursor />
                    <svg width="6" height="10"><path d="M4.500 1v7H0M2 6L0 8l2 2" fill="none" stroke="#b0b0b0" /></svg>
                  </TextLine>
                </Sheet>
              </Canvas>
              <VBar>
                <BarButton $vertical aria-label="向上"><Triangle dir="up" /></BarButton>
                <Thumb $vertical $part={460}><Ridges vertical /></Thumb>
                <Track $part={264} />
                <BarButton $vertical aria-label="向下"><Triangle dir="down" /></BarButton>
              </VBar>
              <HBar>
                <BarButton aria-label="向左"><Triangle dir="left" /></BarButton>
                <Thumb $part={1}><Ridges /></Thumb>
                <BarButton aria-label="向右"><Triangle dir="right" /></BarButton>
              </HBar>
            </Desk>
          </Frame>

          <Status>
            <Cell $w={89}>
              <svg width="16" height="16" viewBox="0 0 16 16"><path d="M8 1l2 5h5l-4 3l2 6l-5-4l-5 4l2-6l-4-3h5z" fill="#ff0" stroke="#222" /></svg>
              <span>第1/1页</span>
            </Cell>
            <Cell $w={166}>位置 X=31.7，Y=26.9</Cell>
            <Cell $w={206}>第 1 行，第 1 列</Cell>
            <Cell $w={206} />
            <Flags>
              <Flag>数学</Flag>
              <Flag>改写</Flag>
              <Flag>大写</Flag>
              <Flag $on>数字</Flag>
            </Flags>
          </Status>
        </Editor>

        <Splitter>
          <Handle aria-label="收起侧栏"><Triangle dir="right" size={5} color="#fff" /></Handle>
        </Splitter>

        <Side>
          <SideTitle>·þÎñÆ÷´íÎó</SideTitle>
          <Notice>
            <NoticeBox>
              <NoticeTitle>404 - ÕÒ²»µ½ÎÄ¼</NoticeTitle>
              <NoticeText>ÄúÒª²éÕÒµÄ×ÊÔ</NoticeText>
              <NoticeText>´¿ÉÄÜÒÑ±»É¾³ý£¬ÒÑ¸ü¸Ä</NoticeText>
            </NoticeBox>
          </Notice>
          <SideBar>
            <BarButton aria-label="向左"><Triangle dir="left" /></BarButton>
            <Thumb $part={94}><Ridges /></Thumb>
            <Track $part={106} />
            <BarButton aria-label="向右"><Triangle dir="right" /></BarButton>
          </SideBar>
        </Side>
      </Main>

      <Footer>程序版本：20120225</Footer>
    </Shell>
  );
}
